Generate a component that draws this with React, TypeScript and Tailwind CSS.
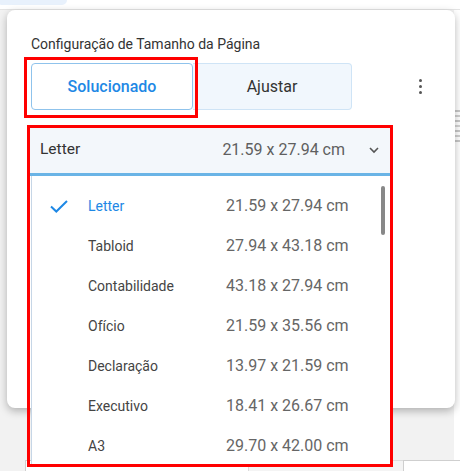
import React from "react";

const items = [
  { name: "Letter", dims: "21.59 x 27.94 cm", selected: true },
  { name: "Tabloid", dims: "27.94 x 43.18 cm" },
  { name: "Contabilidade", dims: "43.18 x 27.94 cm" },
  { name: "Ofício", dims: "21.59 x 35.56 cm" },
  { name: "Declaração", dims: "13.97 x 21.59 cm" },
  { name: "Executivo", dims: "18.41 x 26.67 cm" },
  { name: "A3", dims: "29.70 x 42.00 cm" },
];

export default function App() {
  return (
    <div className="relative w-[460px] h-[471px] overflow-hidden bg-[#f2f2f2] font-['Roboto',sans-serif]">
      {/* background page */}
      <div className="flex flex-col h-full">
        <div className="h-[9px] bg-white flex">
          <div className="w-[67px] h-[5px] bg-[#e8f1fc] rounded-br-[20px] rounded-bl-[4px]" />
        </div>
        <div className="h-px bg-[#e4e4e4]" />
        <div className="flex-1 flex justify-end">
          <div className="w-[6px] bg-white flex flex-col gap-[3px] pt-[100px]">
            <div className="h-[2px] bg-[#c8c8c8]" />
            <div className="h-[2px] bg-[#d0d0d0]" />
            <div className="h-[2px] bg-[#c8c8c8]" />
            <div className="h-[2px] bg-[#d4d4d4]" />
            <div className="h-[2px] bg-[#c8c8c8]" />
            <div className="h-[2px] bg-[#d0d0d0]" />
            <div className="h-[2px] bg-[#c8c8c8]" />
          </div>
        </div>
        <div className="h-[11px] flex">
          <div className="w-[25px]" />
          <div className="w-[223px] bg-white border-l border-t border-[#cfcfcf]" />
          <div className="w-[155px] bg-[#f4f4f4] border-l border-t border-[#dcdcdc]" />
          <div className="flex-1 bg-white border-l border-t border-[#cfcfcf]" />
        </div>
      </div>

      {/* dialog card */}
      <div className="absolute left-[7px] top-[10px] w-[448px] h-[398px] bg-white rounded-lg shadow-[0_3px_8px_rgba(0,0,0,0.28)] px-6 pt-[26px]">
        <div className="text-[14px] leading-[16px] text-[#333]">
          Configuração de Tamanho da Página
        </div>
        <div className="mt-[11px] flex items-center">
          <button className="w-[162px] h-[47px] rounded-[4px] border border-[#8fc3ec] bg-white text-[16px] font-medium text-[#1e88e5]">
            Solucionado
          </button>
          <button className="w-[159px] h-[47px] rounded-r-[4px] border border-l-0 border-[#cfe4f6] bg-[#f1f7fd] text-[16px] text-[#333]">
            Ajustar
          </button>
          <div className="ml-auto w-[22px] flex flex-col items-center gap-[3px]">
            <div className="w-[3px] h-[3px] rounded-full bg-[#555]" />
            <div className="w-[3px] h-[3px] rounded-full bg-[#555]" />
            <div className="w-[3px] h-[3px] rounded-full bg-[#555]" />
          </div>
        </div>

        <div className="mt-[17px] -ml-[2px] w-[361px]">
          <div className="h-[46px] bg-[#f3f7fb] flex items-center pl-[11px] pr-[10px]">
            <span className="flex-1 text-[15.5px] text-[#333]">Letter</span>
            <span className="text-[16px] text-[#5f5f5f]">21.59 x 27.94 cm</span>
            <svg className="ml-[23px]" width="12" height="8" viewBox="0 0 12 8">
              <path d="M2 2 L6 6 L10 2" fill="none" stroke="#555" strokeWidth="1.6" />
            </svg>
          </div>
          <div className="h-[3px] bg-[#6ab4e6]" />
          <div className="relative ml-[2px] w-[359px] bg-white border-l border-[#c6d6e6] pt-[10px]">
            {items.map((it) => (
              <div key={it.name} className="h-[40px] flex items-center pl-[18px]">
                <div className="w-[38px] flex items-center">
                  {it.selected && (
                    <svg width="18" height="13" viewBox="0 0 18 13">
                      <path d="M1 6.5 L6.3 11.5 L17 1" fill="none" stroke="#1e88e5" strokeWidth="2" />
                    </svg>
                  )}
                </div>
                <span
                  className={
                    it.selected
                      ? "w-[138px] text-[14px] text-[#1e88e5]"
                      : "w-[138px] text-[14px] text-[#444]"
                  }
                >
                  {it.name}
                </span>
                <span className="text-[16px] text-[#666]">{it.dims}</span>
              </div>
            ))}
            <div className="absolute right-[5px] top-[10px] w-[4px] h-[49px] rounded-full bg-[#888]" />
          </div>
        </div>
      </div>

      {/* annotation boxes */}
      <div className="absolute left-[24px] top-[57px] w-[174px] h-[61px] border-[3px] border-[#ff0000]" />
      <div className="absolute left-[27px] top-[125px] w-[366px] h-[342px] border-[3px] border-[#ff0000]" />
    </div>
  );
}
